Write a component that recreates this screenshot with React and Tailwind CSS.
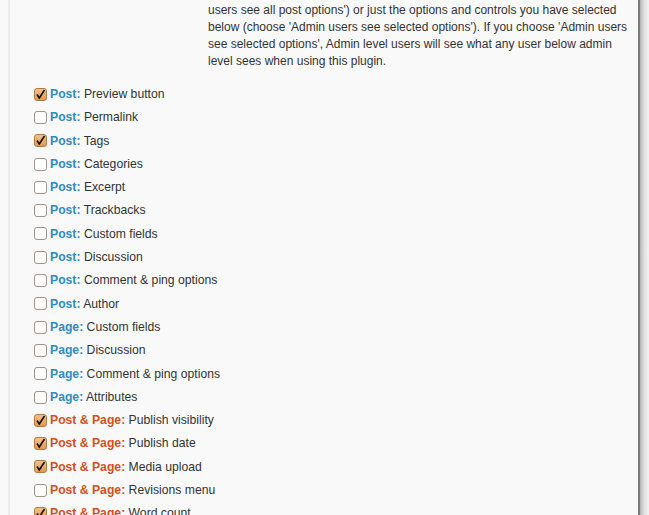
import React from "react";

const options = [
  { type: "Post", label: "Preview button", checked: true },
  { type: "Post", label: "Permalink" },
  { type: "Post", label: "Tags", checked: true },
  { type: "Post", label: "Categories" },
  { type: "Post", label: "Excerpt" },
  { type: "Post", label: "Trackbacks" },
  { type: "Post", label: "Custom fields" },
  { type: "Post", label: "Discussion" },
  { type: "Post", label: "Comment & ping options" },
  { type: "Post", label: "Author" },
  { type: "Page", label: "Custom fields" },
  { type: "Page", label: "Discussion" },
  { type: "Page", label: "Comment & ping options" },
  { type: "Page", label: "Attributes" },
  { type: "Post & Page", label: "Publish visibility", checked: true },
  { type: "Post & Page", label: "Publish date", checked: true },
  { type: "Post & Page", label: "Media upload", checked: true },
  { type: "Post & Page", label: "Revisions menu" },
  { type: "Post & Page", label: "Word count", checked: true },
];

const Checkbox = ({ checked }) => (
  <span
    className={`w-[13px] h-[13px] rounded-[3px] border flex items-center justify-center shrink-0 ${
      checked
        ? "border-[#b07b45] bg-gradient-to-b from-[#f3c088] to-[#e39a4f]"
        : "border-[#a39285] bg-white"
    }`}
  >
    {checked && (
      <svg width="11" height="11" viewBox="0 0 11 11">
        <path d="M2 5.5 L4.3 9 L9.5 1" fill="none" stroke="#111" strokeWidth="1.6" />
      </svg>
    )}
  </span>
);

const OptionRow = ({ type, label, checked }) => {
  const typeColor = type === "Post & Page" ? "text-[#d54e21]" : "text-[#2e8bc3]";
  return (
    <div className="h-[23.3px] flex items-center gap-[3px]">
      <Checkbox checked={checked} />
      <span className="text-[12.2px] text-[#333]">
        <b className={`font-bold ${typeColor}`}>{type}:</b> {label}
      </span>
    </div>
  );
};

export default function App() {
  return (
    <div className="w-[649px] h-[515px] overflow-hidden bg-[#f9f9f9] flex font-['Liberation_Sans',Arial,sans-serif]">
      <div className="ml-[8px] w-[2px] bg-[#ececec] shrink-0" />

      <div className="flex-1 flex flex-col">
        {/* Description */}
        <p className="ml-[198px] pt-[1.5px] text-[12px] leading-[17px] text-[#333]">
          users see all post options') or just the options and controls you have selected
          <br />
          below (choose 'Admin users see selected options'). If you choose 'Admin users
          <br />
          see selected options', Admin level users will see what any user below admin
          <br />
          level sees when using this plugin.
        </p>

        {/* Options */}
        <div className="ml-[24px] mt-[13px] flex flex-col">
          {options.map((o, i) => (
            <OptionRow key={i} {...o} />
          ))}
        </div>
      </div>

      {/* Right frame edge */}
      <div className="w-[2px] bg-[#7b7b7b] shrink-0" />
      <div className="w-[9px] shrink-0 bg-gradient-to-r from-[#b5b5b5] via-[#e2e2e2] to-[#f2f2f2]" />
    </div>
  );
}
